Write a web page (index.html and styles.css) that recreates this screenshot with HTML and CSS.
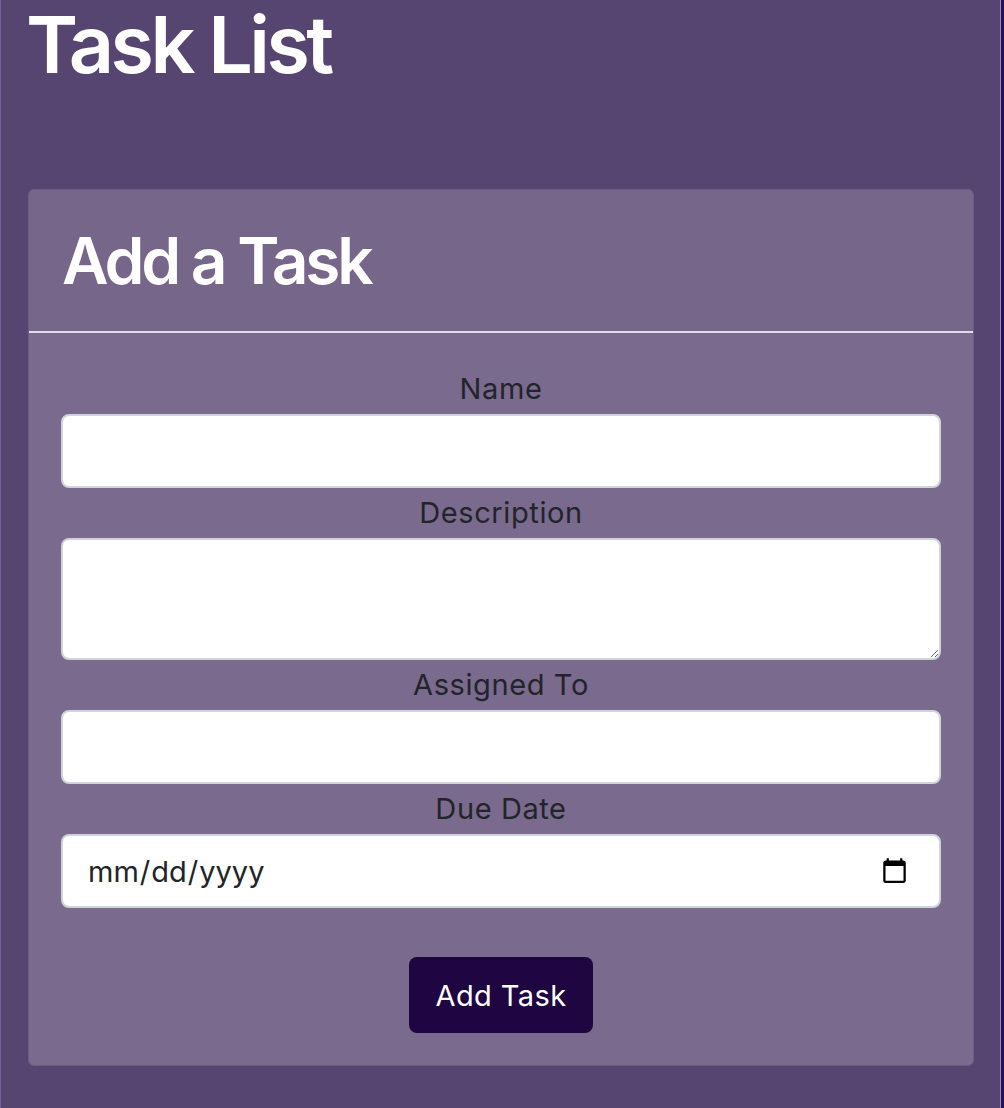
FILE: index.html
```html
<!DOCTYPE html>
<html lang="en">
<head>
<meta charset="utf-8">
<title>Task List</title>
<link rel="stylesheet" href="styles.css">
</head>
<body>
<div class="page">
  <h1 class="title">Task List</h1>
  <section class="card">
    <div class="card-header">
      <h2 class="card-title">Add a Task</h2>
    </div>
    <form class="card-body">
      <label class="field-label" for="name">Name</label>
      <input class="field" id="name" type="text">
      <label class="field-label" for="desc">Description</label>
      <textarea class="field field-area" id="desc"></textarea>
      <label class="field-label" for="assigned">Assigned To</label>
      <input class="field" id="assigned" type="text">
      <label class="field-label" for="due">Due Date</label>
      <input class="field field-date" id="due" type="date">
      <div class="actions">
        <button class="btn" type="button">Add Task</button>
      </div>
    </form>
  </section>
</div>
</body>
</html>
```

FILE: styles.css
```css
* { box-sizing: border-box; }
html, body { margin: 0; padding: 0; }
body {
  background: #574571;
  font-family: "Inter", "Noto Sans", sans-serif;
  color: #212529;
}
.page {
  min-height: 100vh;
  padding: 0 30px 42px 26px;
  box-shadow: inset 1px 0 #7261a0, inset -3px 0 #231154, inset -4px 0 #9a8cb3;
}
.title {
  margin: 0 0 100px;
  font-size: 79px;
  line-height: 1.13;
  font-weight: 600;
  letter-spacing: -0.045em;
  color: #fff;
}
.card {
  margin-left: 2px;
  background: #7a6a8d;
  border: 1px solid #6c5c80;
  border-radius: 6px;
  overflow: hidden;
}
.card-header {
  background: #766689;
  padding: 33px 33px 31px;
  border-bottom: 2px solid #e2dde8;
}
.card-title {
  margin: 0;
  font-size: 64px;
  line-height: 1.2;
  font-weight: 600;
  letter-spacing: -0.05em;
  color: #fff;
}
.card-body {
  display: flex;
  flex-direction: column;
  padding: 31px 32px 32px;
}
.field-label {
  display: block;
  text-align: center;
  font-size: 29px;
  line-height: 50px;
  letter-spacing: 0.6px;
  color: #212529;
}
.field {
  display: block;
  width: 100%;
  height: 74px;
  border: 2px solid #ced4da;
  border-radius: 8px;
  background: #fff;
  padding: 0 24px;
  font-family: "Inter", "Noto Sans", sans-serif;
  font-size: 29px;
  color: #212529;
}
.field-area {
  height: 122px;
  padding: 10px 24px;
  resize: vertical;
}
.field-date { padding-right: 28px; }
.actions {
  display: flex;
  justify-content: center;
  margin-top: 49px;
}
.btn {
  width: 184px;
  height: 76px;
  background: #1f0542;
  color: #fff;
  border: none;
  border-radius: 8px;
  font-family: "Inter", "Noto Sans", sans-serif;
  font-size: 29px;
  letter-spacing: 0.4px;
}
```
